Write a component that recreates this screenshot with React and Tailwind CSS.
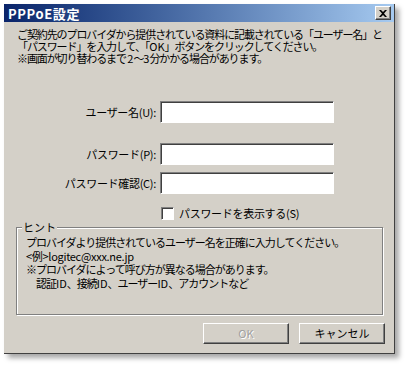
import React from 'react';

const jp = { fontFamily: '"Noto Sans CJK JP", "Liberation Sans", sans-serif' };

const Field = ({ label, mt }) => (
    <div className={`flex items-center ${mt}`}>
        <label className="w-[156px] text-right text-[11px] tracking-[-0.3px] pr-[4px] text-black leading-none">
            {label}
        </label>
        <input
            type="text"
            className="w-[174px] h-[22px] bg-white border border-t-[#808080] border-l-[#808080] border-b-white border-r-white shadow-[inset_1px_1px_0_#404040] outline-none"
        />
    </div>
);

const Button = ({ children, disabled }) => (
    <button
        type="button"
        className={`w-[86px] h-[21px] bg-[#d4d0c8] border border-t-white border-l-white border-b-[#404040] border-r-[#404040] shadow-[inset_-1px_-1px_0_#808080] text-[11px] leading-none ${disabled ? 'text-[#a0a0a0] [text-shadow:1px_1px_0_#ffffff]' : 'text-black'}`}
    >
        {children}
    </button>
);

const App = () => {
    return (
        <div className="w-[407px] h-[365px] bg-white pt-[4px] pl-[4px]" style={jp}>
            <div className="w-[391px] h-[350px] bg-[#d4d0c8] border-r border-b border-[#404040] shadow-[4px_4px_5px_rgba(0,0,0,0.35)] flex flex-col">
                {/* title bar */}
                <div className="h-[18px] flex items-center justify-between pl-[4px] pr-[3px] bg-gradient-to-r from-[#0a246a] to-[#a6caf0]">
                    <span className="text-white font-bold text-[13px] leading-none tracking-[0.6px]">PPPoE設定</span>
                    <div className="w-[16px] h-[14px] bg-[#d4d0c8] border border-t-white border-l-white border-b-[#404040] border-r-[#404040] shadow-[inset_-1px_-1px_0_#808080] flex items-center justify-center">
                        <svg width="8" height="7" viewBox="0 0 8 7">
                            <path d="M0 0 L2 0 L4 2 L6 0 L8 0 L5 3.5 L8 7 L6 7 L4 5 L2 7 L0 7 L3 3.5 Z" fill="#000" />
                        </svg>
                    </div>
                </div>

                {/* description */}
                <div className="pl-[13px] pt-[6px] text-[11px] leading-[12px] tracking-[-1.1px] text-black">
                    <p>ご契約先のプロバイダから提供されている資料に記載されている「ユーザー名」と</p>
                    <p>「パスワード」を入力して、「<span className="tracking-normal">OK</span>」ボタンをクリックしてください。</p>
                    <p>※画面が切り替わるまで <span className="tracking-normal">2</span>～<span className="tracking-normal">3</span>分かかる場合があります。</p>
                </div>

                <Field label="ユーザー名(U):" mt="mt-[37px]" />
                <Field label="パスワード(P):" mt="mt-[20px]" />
                <Field label="パスワード確認(C):" mt="mt-[7px]" />

                <div className="flex items-center mt-[13px] pl-[157px]">
                    <div className="w-[13px] h-[13px] bg-white border border-t-[#808080] border-l-[#808080] border-b-white border-r-white shadow-[inset_1px_1px_0_#404040]" />
                    <span className="ml-[5px] text-[11px] tracking-[-0.3px] leading-none text-black">パスワードを表示する(S)</span>
                </div>

                {/* hint group */}
                <div className="relative mt-[7px] ml-[12px] w-[367px] h-[88px] border border-[#808080] shadow-[inset_1px_1px_0_#ffffff,1px_1px_0_#ffffff]">
                    <span className="absolute left-[5px] top-[-7px] bg-[#d4d0c8] px-[1px] text-[11px] leading-[12px] text-black">ヒント</span>
                    <div className="pl-[9px] pt-[8px] text-[11px] leading-[13.5px] tracking-[-1px] text-black">
                        <p>プロバイダより提供されているユーザー名を正確に入力してください。</p>
                        <p className="tracking-[-0.3px]">&lt;例&gt;logitec@xxx.ne.jp</p>
                        <p>※プロバイダによって呼び方が異なる場合があります。</p>
                        <p className="pl-[10px]">認証<span className="tracking-normal">ID</span>、接続<span className="tracking-normal">ID</span>、ユーザー<span className="tracking-normal">ID</span>、アカウントなど</p>
                    </div>
                </div>

                <div className="flex justify-end gap-[10px] mt-[8px] pr-[9px]">
                    <Button disabled>OK</Button>
                    <Button>キャンセル</Button>
                </div>
            </div>
        </div>
    );
};

export default App;
